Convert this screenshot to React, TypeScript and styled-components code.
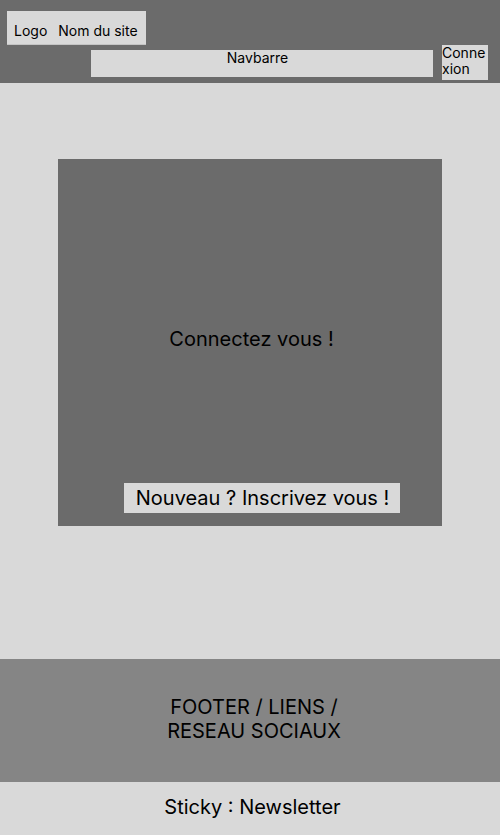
import React from "react";
import styled, { createGlobalStyle } from "styled-components";

const Global = createGlobalStyle`
  html, body { margin: 0; padding: 0; }
  body {
    font-family: Inter, "Noto Sans", "Liberation Sans", sans-serif;
    color: #000;
    background: #d9d9d9;
  }
  * { box-sizing: border-box; }
`;

const Page = styled.div`
  width: 500px;
  height: 835px;
  display: flex;
  flex-direction: column;
  background: #d9d9d9;
`;

const Header = styled.header`
  height: 83px;
  background: #6b6b6b;
  padding-top: 11px;
  display: flex;
  flex-direction: column;
`;

const LogoBox = styled.div`
  margin-left: 7px;
  width: 139px;
  height: 34px;
  background: #d9d9d9;
  border-bottom: 1px solid #c4c4c4;
  display: flex;
  align-items: flex-end;
  gap: 11px;
  padding: 0 0 5px 7px;
  font-size: 14px;
  line-height: 17px;
`;

const NavRow = styled.div`
  display: flex;
  align-items: flex-start;
  padding-left: 91px;
`;

const NavBar = styled.nav`
  margin-top: 5px;
  width: 342px;
  height: 27px;
  background: #d9d9d9;
  font-size: 14px;
  line-height: 15px;
  text-align: center;
  padding: 0 9px 0 0;
`;

const LoginButton = styled.div`
  margin-left: 9px;
  width: 46px;
  height: 35px;
  background: #d9d9d9;
  font-size: 14px;
  line-height: 16px;
  word-break: break-all;
`;

const Main = styled.main`
  height: 576px;
  padding-top: 76px;
  display: flex;
  justify-content: center;
  align-items: flex-start;
`;

const Card = styled.section`
  width: 384px;
  height: 367px;
  background: #6b6b6b;
  display: flex;
  flex-direction: column;
`;

const CardTitle = styled.div`
  flex: 1;
  display: flex;
  align-items: center;
  justify-content: center;
  padding: 35px 0 0 3px;
  font-size: 20px;
`;

const SignupButton = styled.div`
  align-self: flex-start;
  margin: 0 0 13px 66px;
  width: 276px;
  height: 30px;
  background: #d9d9d9;
  display: flex;
  align-items: center;
  justify-content: center;
  font-size: 20px;
  padding-left: 1px;
`;

const Footer = styled.footer`
  height: 123px;
  background: #858585;
  display: flex;
  align-items: center;
  justify-content: center;
  text-align: center;
  font-size: 20px;
  line-height: 24px;
  padding: 0 0 4px 8px;
`;

const Sticky = styled.div`
  height: 53px;
  background: #d9d9d9;
  display: flex;
  align-items: center;
  justify-content: center;
  font-size: 20px;
  padding: 0 0 3px 5px;
`;

export default function App() {
  return (
    <>
      <Global />
      <Page>
        <Header>
          <LogoBox>
            <span>Logo</span>
            <span>Nom du site</span>
          </LogoBox>
          <NavRow>
            <NavBar>Navbarre</NavBar>
            <LoginButton>Connexion</LoginButton>
          </NavRow>
        </Header>
        <Main>
          <Card>
            <CardTitle>Connectez vous !</CardTitle>
            <SignupButton>Nouveau ? Inscrivez vous !</SignupButton>
          </Card>
        </Main>
        <Footer>
          FOOTER / LIENS /<br />
          RESEAU SOCIAUX
        </Footer>
        <Sticky>Sticky : Newsletter</Sticky>
      </Page>
    </>
  );
}
